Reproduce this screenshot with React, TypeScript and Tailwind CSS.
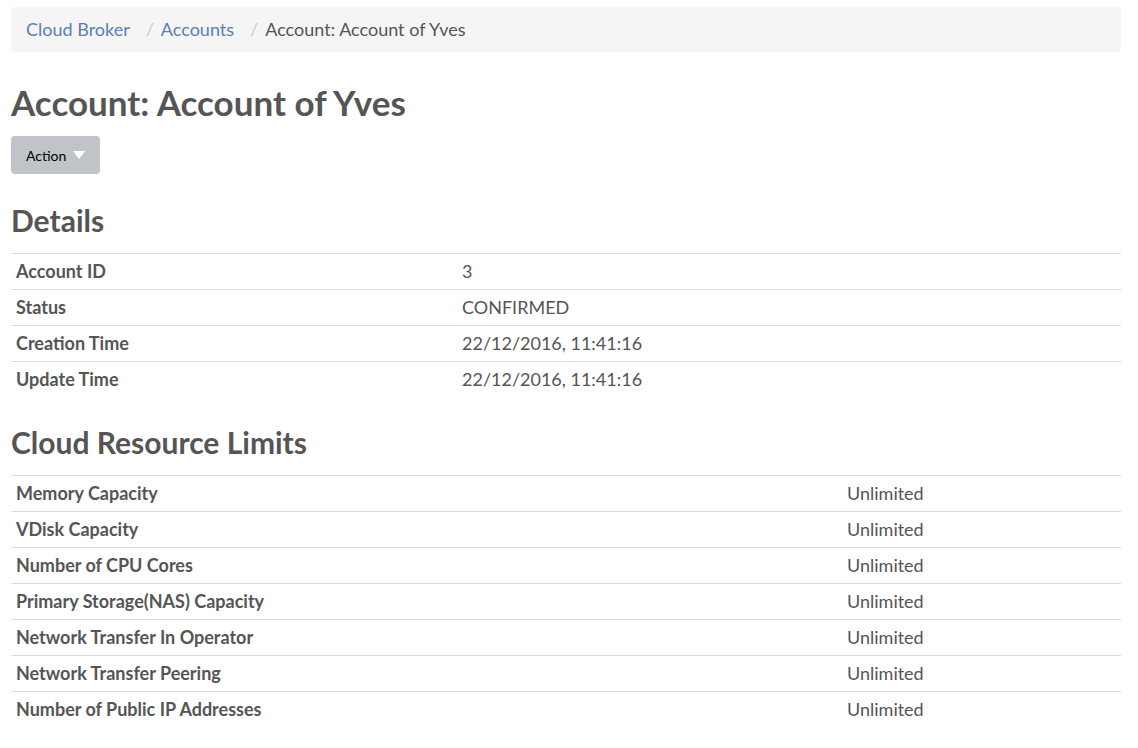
import React from 'react';

const details: [string, string][] = [
  ['Account ID', '3'],
  ['Status', 'CONFIRMED'],
  ['Creation Time', '22/12/2016, 11:41:16'],
  ['Update Time', '22/12/2016, 11:41:16'],
];

const limits: string[] = [
  'Memory Capacity',
  'VDisk Capacity',
  'Number of CPU Cores',
  'Primary Storage(NAS) Capacity',
  'Network Transfer In Operator',
  'Network Transfer Peering',
  'Number of Public IP Addresses',
];

const InfoTable: React.FC<{ rows: [string, string][]; labelWidth: string }> = ({ rows, labelWidth }) => (
  <table className="w-full border-collapse text-[18px]">
    <tbody>
      {rows.map(([label, value]) => (
        <tr key={label} className="border-t border-[#dddddd]">
          <td className={`${labelWidth} h-[36px] px-[5px] py-0 font-bold align-middle`}>{label}</td>
          <td className="h-[36px] px-[5px] py-0 align-middle">{value}</td>
        </tr>
      ))}
    </tbody>
  </table>
);

export default function App() {
  return (
    <div
      className="min-h-screen bg-white text-[#555555] pl-[11px] pr-[17px] pt-[7px]"
      style={{ fontFamily: 'Lato, "Open Sans", sans-serif' }}
    >
      {/* Breadcrumb */}
      <nav className="flex h-[45px] items-center rounded bg-[#f5f5f5] px-[15px] text-[18px]">
        <a className="text-[#5b80b2]">Cloud Broker</a>
        <span className="pl-[16px] pr-[7px] text-[#cccccc]">/</span>
        <a className="text-[#5b80b2]">Accounts</a>
        <span className="pl-[16px] pr-[7px] text-[#cccccc]">/</span>
        <span>Account: Account of Yves</span>
      </nav>

      <h1 className="mt-[30px] text-[35px] font-bold leading-[40px]">Account: Account of Yves</h1>

      <button className="mt-[14px] flex h-[38px] items-center gap-[7px] rounded bg-[#c0c4c8] pl-[15px] pr-[15px] text-[14px] text-black">
        Action
        <svg width="12" height="8" viewBox="0 0 12 8">
          <path d="M0 0h12L6 8z" fill="#ffffff" />
        </svg>
      </button>

      <h2 className="mt-[29px] text-[30px] font-bold leading-[34px]">Details</h2>
      <div className="mt-[16px]">
        <InfoTable rows={details} labelWidth="w-[446px]" />
      </div>

      <h2 className="mt-[27px] text-[30px] font-bold leading-[34px]">Cloud Resource Limits</h2>
      <div className="mt-[16px]">
        <InfoTable rows={limits.map((l) => [l, 'Unlimited'])} labelWidth="w-[831px]" />
      </div>
    </div>
  );
}
